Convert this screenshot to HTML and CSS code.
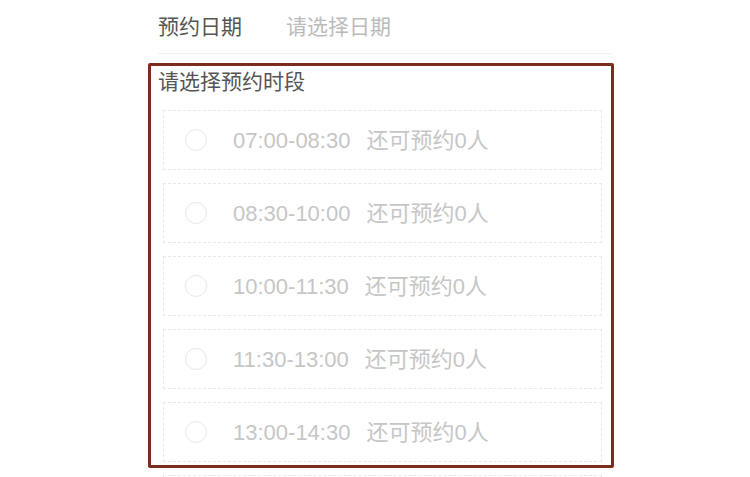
FILE: index.html
```html
<!DOCTYPE html>
<html lang="zh-CN">
<head>
    <meta charset="UTF-8">
    <title>预约时段</title>
    <link rel="stylesheet" href="styles.css">
</head>
<body>
    <div class="page">
        <div class="field-row">
            <span class="field-label">预约日期</span>
            <span class="field-value">请选择日期</span>
        </div>
        <div class="divider"></div>
        <div class="section-title">请选择预约时段</div>
        <ul class="slot-list">
            <li class="slot"><span class="radio"></span><span class="slot-text"><span class="slot-time">07:00-08:30</span>还可预约0人</span></li>
            <li class="slot"><span class="radio"></span><span class="slot-text"><span class="slot-time">08:30-10:00</span>还可预约0人</span></li>
            <li class="slot"><span class="radio"></span><span class="slot-text"><span class="slot-time">10:00-11:30</span>还可预约0人</span></li>
            <li class="slot"><span class="radio"></span><span class="slot-text"><span class="slot-time">11:30-13:00</span>还可预约0人</span></li>
            <li class="slot"><span class="radio"></span><span class="slot-text"><span class="slot-time">13:00-14:30</span>还可预约0人</span></li>
            <li class="slot"></li>
        </ul>
        <div class="highlight"></div>
    </div>
</body>
</html>
```

FILE: styles.css
```css
html, body {
    margin: 0;
    padding: 0;
    background: #fff;
    height: 100%;
    overflow: hidden;
}

body {
    font-family: "Liberation Sans", "Noto Sans CJK SC", sans-serif;
}

.page {
    position: relative;
    width: 466px;
    margin-left: 148px;
}

.field-row {
    display: flex;
    align-items: center;
    height: 49px;
    padding: 0 0 4px 10px;
    font-size: 21px;
}

.field-label {
    color: #555;
    width: 128px;
}

.field-value {
    color: #bbb;
}

.divider {
    height: 1px;
    background: #eee;
    margin: 0 2px 0 10px;
}

.section-title {
    margin-top: 13px;
    padding-left: 10px;
    font-size: 21px;
    line-height: 30px;
    color: #555;
}

.slot-list {
    list-style: none;
    margin: 13px 0 0 15px;
    padding: 0;
    width: 439px;
    display: flex;
    flex-direction: column;
    gap: 13px;
}

.slot {
    box-sizing: border-box;
    height: 60px;
    flex-shrink: 0;
    border: 1px dashed #e8e8e8;
    display: flex;
    align-items: center;
    padding: 2px 0 0 21px;
    font-size: 22px;
    color: #c6c6c6;
}

.radio {
    box-sizing: border-box;
    width: 22px;
    height: 22px;
    margin-top: -2px;
    border: 1px solid #e8e8e8;
    border-radius: 50%;
    margin-right: 26px;
    flex-shrink: 0;
}

.slot-text {
    line-height: 30px;
}

.slot-time {
    margin-right: 16px;
}

.highlight {
    position: absolute;
    top: 63px;
    left: 0;
    width: 466px;
    height: 405px;
    box-sizing: border-box;
    border: 3px solid #7b2c1d;
    border-radius: 2px;
    pointer-events: none;
}
```
